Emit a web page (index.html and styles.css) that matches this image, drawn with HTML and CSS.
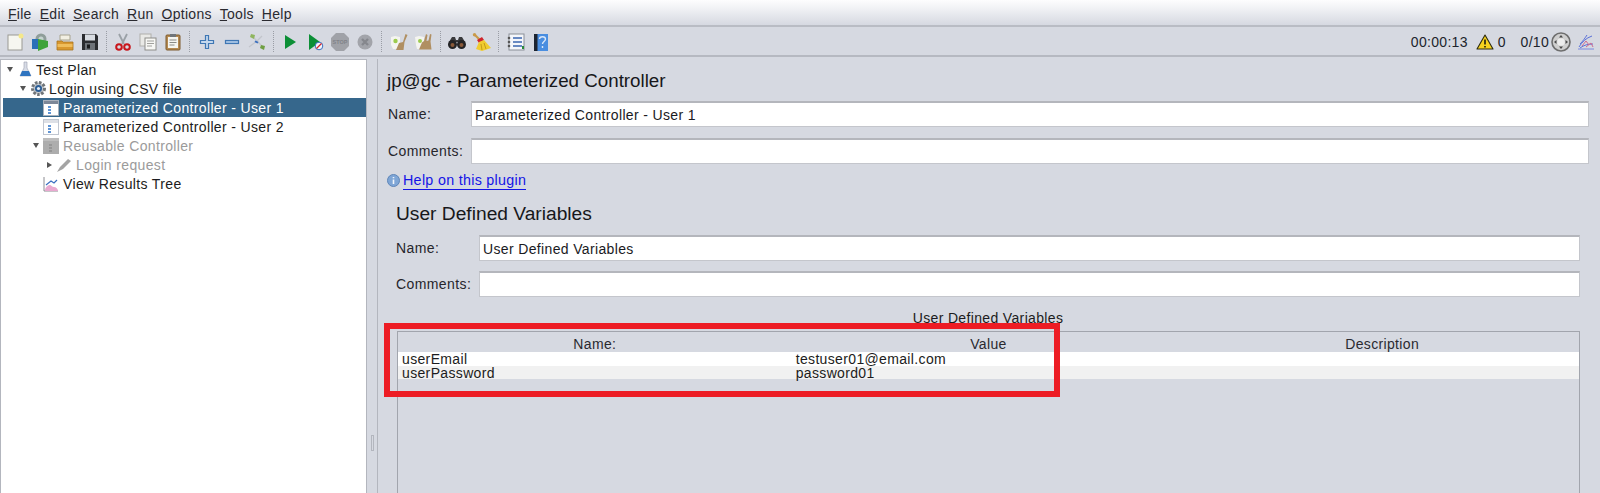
FILE: index.html
```html
<!DOCTYPE html>
<html lang="en">
<head>
<meta charset="utf-8">
<title>Apache JMeter</title>
<link rel="stylesheet" href="styles.css">
</head>
<body>
<div class="app">
  <nav class="menubar">
    <span class="menu"><u>F</u>ile</span>
    <span class="menu"><u>E</u>dit</span>
    <span class="menu"><u>S</u>earch</span>
    <span class="menu"><u>R</u>un</span>
    <span class="menu"><u>O</u>ptions</span>
    <span class="menu"><u>T</u>ools</span>
    <span class="menu"><u>H</u>elp</span>
  </nav>
  <div class="toolbar">
    <span class="slot"><svg width="18" height="18" viewBox="0 0 18 18"><rect x="2" y="2" width="14" height="15" fill="#f6f6f0" stroke="#9a9a94"/><circle cx="15" cy="3" r="2.500" fill="#f5e88a"/></svg></span>
    <span class="slot"><svg width="18" height="18" viewBox="0 0 18 18"><circle cx="10" cy="6" r="5.500" fill="#8f9e9a"/><circle cx="10" cy="6" r="2.500" fill="#c6d4d0"/><rect x="1" y="6" width="6" height="10" fill="#2a6fb8"/><path d="M7 6l10 2v6l-10 4z" fill="#3ea33a"/></svg></span>
    <span class="slot"><svg width="18" height="18" viewBox="0 0 18 18"><path d="M4 7V2h10v5z" fill="#f2efe2" stroke="#a8a490"/><path d="M1 8h5l1 1h10v8H1z" fill="#d9982f" stroke="#a8741f" stroke-width=".8"/><path d="M1.500 11h15v3h-15z" fill="#efbd5c"/></svg></span>
    <span class="slot"><svg width="18" height="18" viewBox="0 0 18 18"><path d="M1 1h14l2 2v14H1z" fill="#2a2c30"/><rect x="4" y="1.500" width="10" height="6" fill="#d8dce2"/><rect x="4" y="10" width="10" height="7" fill="#6d7278"/><rect x="6" y="11.500" width="3" height="4" fill="#181a1c"/></svg></span>
    <span class="sep"></span>
    <span class="slot"><svg width="18" height="18" viewBox="0 0 18 18"><path d="M5 1l5 10M13 1L8 11" stroke="#9aa0a6" stroke-width="1.800" fill="none"/><circle cx="5" cy="14" r="2.800" fill="none" stroke="#c8161c" stroke-width="2"/><circle cx="13" cy="14" r="2.800" fill="none" stroke="#c8161c" stroke-width="2"/></svg></span>
    <span class="slot"><svg width="18" height="18" viewBox="0 0 18 18"><rect x="1" y="1" width="11" height="12" fill="#e9e9e6" stroke="#b0b0ac"/><rect x="6" y="5" width="11" height="12" fill="#f7f7f4" stroke="#8e8e8a"/><path d="M8 8h7M8 10.500h7M8 13h5" stroke="#a0a09c"/></svg></span>
    <span class="slot"><svg width="18" height="18" viewBox="0 0 18 18"><rect x="2" y="2" width="14" height="15" rx="1" fill="#b58a52" stroke="#7c5a2e"/><rect x="4" y="4" width="10" height="11" fill="#f5f5f0"/><rect x="6" y="1" width="6" height="3" fill="#70757a"/><path d="M5.500 7h7M5.500 9.500h7M5.500 12h5" stroke="#8a8a86"/></svg></span>
    <span class="sep"></span>
    <span class="slot"><svg width="16" height="16" viewBox="0 0 16 16"><path d="M6.500 1.500h3v5h5v3h-5v5h-3v-5h-5v-3h5z" fill="#c4d8ee" stroke="#3f77b4" stroke-width="1.200"/></svg></span>
    <span class="slot"><svg width="16" height="16" viewBox="0 0 16 16"><rect x="1.500" y="6.500" width="13" height="3" fill="#a9c6e6" stroke="#3f77b4" stroke-width="1.200"/></svg></span>
    <span class="slot"><svg width="20" height="18" viewBox="0 0 20 18"><path d="M5 3l11 11M2 14l8-6M15 3l-5 5" stroke="#c2c5cb" stroke-width="1.300" fill="none"/><path d="M4 1l4 1-1 4-4-2z" fill="#8fb55e"/><path d="M8.500 7.500l3 1.500-1 1.500-3-1.500z" fill="#3a6fc0"/><path d="M14 12l4 1-1 4-4-2z" fill="#6f9f42"/></svg></span>
    <span class="sep"></span>
    <span class="slot"><svg width="18" height="18" viewBox="0 0 18 18"><path d="M4 2l11 7-11 7z" fill="#0c8f36"/></svg></span>
    <span class="slot"><svg width="18" height="18" viewBox="0 0 18 18"><path d="M3 1l11 8-11 8z" fill="#0c8f36"/><circle cx="13" cy="13" r="3.800" fill="#f4f6fa" stroke="#3a6fc0"/><path d="M10.500 15.500l5-5" stroke="#d8262c" stroke-width="1.300"/></svg></span>
    <span class="slot"><svg width="20" height="20" viewBox="0 0 20 20"><path d="M6 1h8l5 5v8l-5 5H6l-5-5V6z" fill="#a0a2a8"/><text class="stoptext" x="10" y="12">STOP</text></svg></span>
    <span class="slot"><svg width="18" height="18" viewBox="0 0 18 18"><circle cx="9" cy="9" r="7.500" fill="#a2a4aa"/><path d="M6 6l6 6M12 6l-6 6" stroke="#85878d" stroke-width="2.400"/></svg></span>
    <span class="sep"></span>
    <span class="slot"><svg width="18" height="18" viewBox="0 0 18 18"><path d="M1 4l4-1 5 1v8l-2 4H3l-2-4z" fill="#f4f4f0"/><circle cx="5.500" cy="8" r="2.200" fill="#9ccb4e"/><path d="M15.500 1l2 1-3 7-1 8H6l3-7 4-1z" fill="#b08f62"/></svg></span>
    <span class="slot"><svg width="18" height="18" viewBox="0 0 18 18"><path d="M0 4l4-1 5 1v8l-2 4H2l-1-4z" fill="#f4f4f0"/><circle cx="5" cy="8" r="2" fill="#9ccb4e"/><path d="M11 1l1.500 1-1 6 2-.5 1.500-6.500 1.500.5-1 7 1 8H4l3-7 2-1.500z" fill="#b08f62"/></svg></span>
    <span class="sep"></span>
    <span class="slot"><svg width="20" height="18" viewBox="0 0 20 18"><path d="M2 9l3-5h3l1 3h2l1-3h3l3 5z" fill="#3a3a3c"/><circle cx="5.500" cy="11.500" r="4.500" fill="#242426"/><circle cx="14.500" cy="11.500" r="4.500" fill="#242426"/><circle cx="5.500" cy="12" r="2" fill="#8a5a3a"/><circle cx="14.500" cy="12" r="2" fill="#8a5a3a"/></svg></span>
    <span class="slot"><svg width="20" height="18" viewBox="0 0 20 18"><path d="M3 2l5 5" stroke="#c99a4a" stroke-width="2.200"/><circle cx="2.500" cy="1.800" r="1.700" fill="#c99a4a"/><path d="M5 7l5-3 2 3-5 3z" fill="#d0242a"/><path d="M7 9l5-2 7 8-9 3-6-2z" fill="#f0cc30"/><path d="M9 11l1 6M12 10l2 6" stroke="#c49c18"/></svg></span>
    <span class="sep"></span>
    <span class="slot"><svg width="18" height="18" viewBox="0 0 18 18"><rect x="2" y="1" width="15" height="16" fill="#f4f6fb" stroke="#8a8f98"/><path d="M6 5h9M6 9h9M6 13h9" stroke="#3a66b0" stroke-width="1.500"/><circle cx="2" cy="5" r="1.300" fill="#555"/><circle cx="2" cy="9" r="1.300" fill="#555"/><circle cx="2" cy="13" r="1.300" fill="#555"/><rect x="15" y="13" width="2" height="3" fill="#2a8a3a"/></svg></span>
    <span class="slot"><svg width="18" height="18" viewBox="0 0 18 18"><rect x="2" y="1" width="14" height="17" fill="#4a8ee0"/><rect x="2" y="1" width="3.500" height="17" fill="#1c2430"/><path d="M7.500 6c0-3 6-3 6 0 0 2.500-3 2.500-3 5M10.500 13v2" stroke="#dbe8f8" stroke-width="1.400" fill="none"/></svg></span>
    <div class="status">
      <span class="timer">00:00:13</span>
      <svg class="warn" width="18" height="16" viewBox="0 0 18 16"><path d="M9 1l8 14H1z" fill="#f6d21e" stroke="#2c2a10" stroke-width="1.100" stroke-linejoin="round"/><path d="M9 5.500v5M9 12v1.500" stroke="#1c1c10" stroke-width="1.600"/></svg>
      <span class="count-a">0</span>
      <span class="count-b">0/10</span>
      <svg class="globe" width="20" height="20" viewBox="0 0 20 20"><circle cx="10" cy="10" r="9" fill="#cfcfcf" stroke="#6e6e6e" stroke-width="1.600"/><circle cx="10" cy="10" r="3.800" fill="#ededed"/><path d="M10 3l2 2.500H8zM10 17l2-2.500H8zM3 10l2.500-2v4zM17 10l-2.500-2v4z" fill="#4a4a4a"/></svg>
      <svg class="logo" width="18" height="18" viewBox="0 0 18 18"><path d="M2 14C5 9 9 5 15 3M3 15c4-3 8-4 13-4M3 11c3-3 5-6 7-9" stroke="#5a70d8" fill="none"/><path d="M5 13l4-5 3 4M9 14l5-4 2 4" stroke="#d06a90" fill="none"/><path d="M1 16h16" stroke="#7a8ae0"/></svg>
    </div>
  </div>
  <main class="workspace">
    <aside class="tree">
      <div class="node lvl0"><i class="arrow down"></i><svg class="ico wide" width="17" height="17" viewBox="0 0 17 17"><path d="M7 1h3v6l4 8H3l4-8z" fill="#d8dce6" stroke="#9aa0b0" stroke-width=".6"/><path d="M5 10h7l2 5H3z" fill="#2f74c0"/></svg><span>Test Plan</span></div>
      <div class="node lvl1"><i class="arrow down"></i><svg class="ico wide" width="17" height="17" viewBox="0 0 17 17"><circle cx="8.500" cy="8.500" r="6" fill="#c4c8cc" stroke="#6f7478" stroke-width="3" stroke-dasharray="2.500 1.500"/><circle cx="8.500" cy="8.500" r="3.500" fill="#2a5d96"/><circle cx="8.500" cy="8.500" r="1.600" fill="#e4edf6"/></svg><span>Login using CSV file</span></div>
      <div class="node lvl2 selected"><svg class="ico" width="16" height="16" viewBox="0 0 16 16"><rect x=".5" y=".5" width="15" height="15" fill="#fff" stroke="#a8b0bc"/><rect x="1" y="1" width="14" height="3" fill="#7c8798"/><path d="M5 7h3M5 10h3M5 13h3" stroke="#2b72c6" stroke-width="1.300"/></svg><span>Parameterized Controller - User 1</span></div>
      <div class="node lvl2"><svg class="ico" width="16" height="16" viewBox="0 0 16 16"><rect x=".5" y=".5" width="15" height="15" fill="#fff" stroke="#c0c6d0"/><rect x="1" y="1" width="14" height="3" fill="#dde0e6"/><path d="M5 7h3M5 10h3M5 13h3" stroke="#2b72c6" stroke-width="1.300"/></svg><span>Parameterized Controller - User 2</span></div>
      <div class="node lvl2b off"><i class="arrow down"></i><svg class="ico" width="16" height="16" viewBox="0 0 16 16"><rect width="16" height="16" fill="#adadad"/><rect y="0" width="16" height="3" fill="#bdbdbd"/><path d="M6 7h3M6 10h3M6 13h3" stroke="#8e8e8e" stroke-width="1.300"/></svg><span>Reusable Controller</span></div>
      <div class="node lvl3 off"><i class="arrow right"></i><svg class="ico wide4" width="16" height="16" viewBox="0 0 16 16"><path d="M1 15l3-5 8-8 3 2-8 8z" fill="#a4a4a4"/></svg><span>Login request</span></div>
      <div class="node lvl2"><svg class="ico" width="16" height="16" viewBox="0 0 16 16"><path d="M1 1v14h14" stroke="#8c8c92" fill="none"/><path d="M2 15c0-5 4-6 5-6s2 2 4 2 4 2 4 4z" fill="#e9a9d0"/><path d="M3 9l5-4 3 2 3-3" stroke="#3a6fc0" fill="none" stroke-width="1.200"/></svg><span>View Results Tree</span></div>
    </aside>
    <div class="divider"><span class="grip"></span></div>
    <section class="panel">
      <h1 class="title">jp@gc - Parameterized Controller</h1>
      <div class="field"><label class="lab">Name:</label><div class="input">Parameterized Controller - User 1</div></div>
      <div class="field"><label class="lab">Comments:</label><div class="input"></div></div>
      <div class="help">
        <svg width="13" height="13" viewBox="0 0 13 13"><circle cx="6.500" cy="6.500" r="6" fill="#7fa6d6" stroke="#5f86b8"/><path d="M6.500 3v1.300M6.500 5.500V10" stroke="#f2f6fb" stroke-width="1.600"/></svg>
        <a class="helplink">Help on this plugin</a>
      </div>
      <div class="inner">
        <h2 class="subtitle">User Defined Variables</h2>
        <div class="field"><label class="lab">Name:</label><div class="input">User Defined Variables</div></div>
        <div class="field"><label class="lab">Comments:</label><div class="input"></div></div>
        <div class="tabletitle">User Defined Variables</div>
        <div class="table">
          <div class="row head"><span>Name:</span><span>Value</span><span>Description</span></div>
          <div class="row"><span>userEmail</span><span>testuser01@email.com</span><span></span></div>
          <div class="row alt"><span>userPassword</span><span>password01</span><span></span></div>
        </div>
      </div>
    </section>
  </main>
  <div class="highlight"></div>
</div>
</body>
</html>
```
FILE: styles.css
```css
* { box-sizing: border-box; }
html, body { margin: 0; padding: 0; height: 493px; overflow: hidden; }
body { background: #d6d9e1; font-family: "Liberation Sans", Arial, sans-serif; color: #1c1c20; }
.app { position: relative; height: 493px; display: flex; flex-direction: column; overflow: hidden; }

.menubar { height: 27px; flex: none; display: flex; align-items: center; gap: 8px; padding: 3px 0 0 8px; font-size: 14px; letter-spacing: .28px; background: linear-gradient(#fdfdfe, #f2f3f6 30%, #d6d9e1); border-bottom: 2px solid #b9bcc4; color: #2a2a30; }

.toolbar { height: 30px; flex: none; display: flex; align-items: center; padding: 1px 0 0 2px; border-bottom: 2px solid #b6b9c1; }
.slot { width: 25px; flex: none; display: flex; justify-content: center; align-items: center; }
.sep { width: 8.5px; height: 22px; flex: none; background: linear-gradient(#9a9da5 50%, transparent 50%) center / 1px 2px repeat-y; }
.stoptext { font-family: "Liberation Sans", Arial, sans-serif; font-size: 5.500px; font-weight: 700; text-anchor: middle; fill: #808288; }
.status { margin-left: auto; display: flex; align-items: center; font-size: 14px; color: #20242c; padding-right: 5px; }
.timer { letter-spacing: .3px; margin-right: 8px; }
.count-a { margin: 0 15px 0 4px; }
.count-b { margin-right: 2px; letter-spacing: .3px; }
.globe { margin-right: 6px; }

.workspace { flex: 1; min-height: 0; display: flex; padding-top: 2px; }

.tree { width: 367px; flex: none; background: #fff; border: 1px solid #b3b6be; border-bottom: 0; padding: 0 0 0 2px; font-size: 14px; letter-spacing: .35px; }
.node { height: 19px; display: flex; align-items: center; white-space: nowrap; }
.node span { padding-top: 1px; }
.node .ico { flex: none; margin-right: 4px; }
.node .wide { margin-right: 2px; }
.node .wide4 { margin-right: 4px; }
.lvl0 { padding-left: 4px; }
.lvl1 { padding-left: 17px; }
.lvl2 { padding-left: 40px; }
.lvl2b { padding-left: 30px; }
.lvl3 { padding-left: 44px; }
.arrow { display: inline-block; flex: none; height: 0; width: 0; margin-right: 4px; }
.arrow.down { border: 3px solid transparent; border-top: 5px solid #555; border-bottom: 0; }
.arrow.right { border: 3px solid transparent; border-left: 5px solid #555; border-right: 0; }
.selected { background: #36678c; color: #fff; }
.off { color: #9b9b9b; }

.divider { width: 11px; flex: none; position: relative; border-right: 1px solid #b3b6be; }
.grip { position: absolute; left: 4px; top: 376px; width: 3px; height: 16px; border: 1px solid #b3b6be; }

.panel { flex: 1; min-width: 0; display: flex; flex-direction: column; padding: 0 11px 0 9px; }
.title { margin: 12px 0 0; font-size: 18.75px; line-height: 20px; font-weight: 400; color: #17171a; }
.field { display: flex; align-items: center; height: 26px; }
.panel > .field:nth-of-type(1) { margin-top: 10px; }
.panel > .field:nth-of-type(2) { margin-top: 11px; }
.lab { width: 84px; flex: none; font-size: 14px; letter-spacing: .4px; color: #26262c; padding-left: 1px; }
.input { flex: 1; height: 100%; background: #fff; border: 1px solid #c4c6cc; border-top: 2px solid #b4b6bc; padding: 0 3px; display: flex; align-items: center; font-size: 14px; letter-spacing: .35px; color: #1a1a1e; }
.help { display: flex; align-items: center; gap: 3px; margin-top: 6px; height: 20px; }
.helplink { color: #1414e6; font-size: 14.3px; letter-spacing: .3px; border-bottom: 1px solid #1414e6; line-height: 18px; }
.inner { flex: 1; min-height: 0; display: flex; flex-direction: column; padding: 0 9px 0 9px; }
.subtitle { margin: 13px 0 0; font-size: 19.2px; line-height: 22px; font-weight: 400; color: #17171a; }
.inner .field { margin-top: 10px; }
.inner .lab { width: 83px; padding-left: 0; }
.tabletitle { margin-top: 13px; text-align: center; font-size: 14px; letter-spacing: .35px; line-height: 16px; }
.table { flex: 1; margin: 5px 0 0 1px; border: 1px solid #a2a5ad; border-bottom: 0; font-size: 14px; letter-spacing: .35px; }
.row { display: grid; grid-template-columns: repeat(3, 1fr); height: 13.5px; line-height: 15px; background: #fff; }
.row span { padding-left: 4px; white-space: nowrap; }
.row.alt { background: #f1f1f1; }
.row.head { height: 20px; line-height: 24px; background: #d6d9e1; }
.row.head span { text-align: center; padding: 0; color: #2a2a30; }

.highlight { position: absolute; left: 384px; top: 323px; width: 676px; height: 74px; border: 6.5px solid #ed1c24; }
```
